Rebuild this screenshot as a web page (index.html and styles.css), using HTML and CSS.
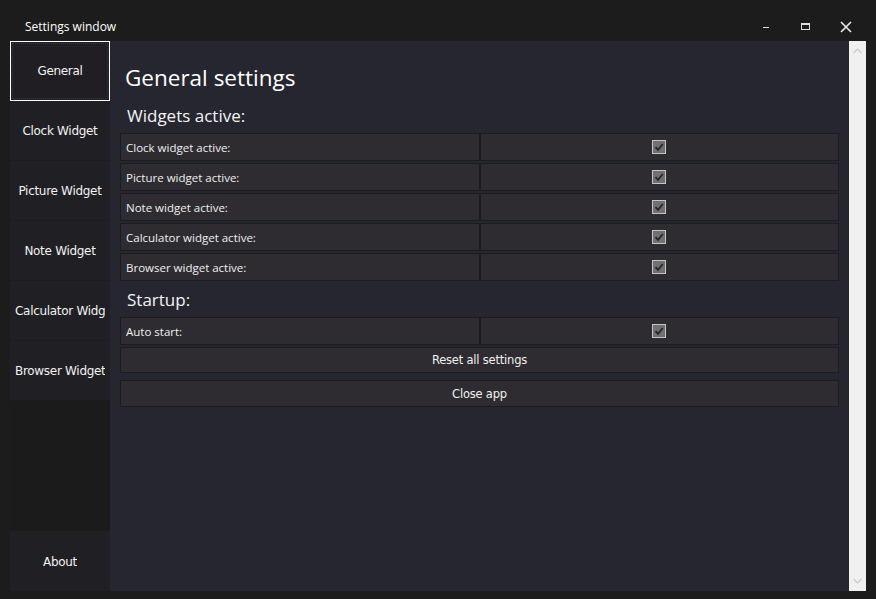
FILE: index.html
```html
<!DOCTYPE html>
<html>
<head>
<meta charset="utf-8">
<title>Settings window</title>
<link rel="stylesheet" href="styles.css">
</head>
<body>
<div class="window">
  <header class="titlebar">
    <span class="title">Settings window</span>
    <div class="controls">
      <span class="ctrl"><svg width="10" height="10" viewBox="0 0 10 10"><rect x="2" y="5" width="6" height="1" fill="#e0e0e0"/></svg></span>
      <span class="ctrl"><svg width="10" height="10" viewBox="0 0 10 10"><rect x="0.5" y="1.5" width="8" height="6" fill="none" stroke="#e0e0e0" stroke-width="1"/><rect x="0" y="1" width="9" height="2" fill="#e0e0e0"/></svg></span>
      <span class="ctrl"><svg width="12" height="12" viewBox="0 0 12 12"><path d="M1 1 L11 11 M11 1 L1 11" stroke="#e8e8e8" stroke-width="1.6"/></svg></span>
    </div>
  </header>
  <div class="frame">
    <nav class="sidebar">
      <div class="navbtn active"><span>General</span></div>
      <div class="navbtn"><span>Clock Widget</span></div>
      <div class="navbtn"><span>Picture Widget</span></div>
      <div class="navbtn"><span>Note Widget</span></div>
      <div class="navbtn"><span>Calculator Widget</span></div>
      <div class="navbtn"><span>Browser Widget</span></div>
      <div class="navspacer"></div>
      <div class="navbtn about"><span>About</span></div>
    </nav>
    <main class="content">
      <h1 class="heading">General settings</h1>
      <h2 class="subheading">Widgets active:</h2>
      <div class="rows">
        <div class="row"><div class="cell label">Clock widget active:</div><div class="cell check"><span class="checkbox"><svg width="12" height="12" viewBox="0 0 12 12"><path d="M2.5 6.2 L5 8.8 L9.8 3" fill="none" stroke="#262626" stroke-width="1.8"/></svg></span></div></div>
        <div class="row"><div class="cell label">Picture widget active:</div><div class="cell check"><span class="checkbox"><svg width="12" height="12" viewBox="0 0 12 12"><path d="M2.5 6.2 L5 8.8 L9.8 3" fill="none" stroke="#262626" stroke-width="1.8"/></svg></span></div></div>
        <div class="row"><div class="cell label">Note widget active:</div><div class="cell check"><span class="checkbox"><svg width="12" height="12" viewBox="0 0 12 12"><path d="M2.5 6.2 L5 8.8 L9.8 3" fill="none" stroke="#262626" stroke-width="1.8"/></svg></span></div></div>
        <div class="row"><div class="cell label">Calculator widget active:</div><div class="cell check"><span class="checkbox"><svg width="12" height="12" viewBox="0 0 12 12"><path d="M2.5 6.2 L5 8.8 L9.8 3" fill="none" stroke="#262626" stroke-width="1.8"/></svg></span></div></div>
        <div class="row"><div class="cell label">Browser widget active:</div><div class="cell check"><span class="checkbox"><svg width="12" height="12" viewBox="0 0 12 12"><path d="M2.5 6.2 L5 8.8 L9.8 3" fill="none" stroke="#262626" stroke-width="1.8"/></svg></span></div></div>
      </div>
      <h2 class="subheading startup">Startup:</h2>
      <div class="rows">
        <div class="row"><div class="cell label">Auto start:</div><div class="cell check"><span class="checkbox"><svg width="12" height="12" viewBox="0 0 12 12"><path d="M2.5 6.2 L5 8.8 L9.8 3" fill="none" stroke="#262626" stroke-width="1.8"/></svg></span></div></div>
        <div class="btn reset">Reset all settings</div>
      </div>
      <div class="btn close">Close app</div>
    </main>
    <div class="scrollbar">
      <svg width="9" height="6" viewBox="0 0 9 6"><path d="M0.5 5 L4.5 1 L8.5 5" fill="none" stroke="#c8c8c8" stroke-width="1.2"/></svg>
      <svg width="9" height="6" viewBox="0 0 9 6"><path d="M0.5 1 L4.5 5 L8.5 1" fill="none" stroke="#c8c8c8" stroke-width="1.2"/></svg>
    </div>
  </div>
</div>
</body>
</html>
```

FILE: styles.css
```css
* { box-sizing: border-box; }
html, body { margin: 0; padding: 0; }
body {
  background: #1c1c1c;
  width: 876px;
  height: 599px;
  overflow: hidden;
}
.window {
  width: 876px;
  height: 599px;
  background: #1c1c1c;
  display: flex;
  flex-direction: column;
}
.titlebar {
  height: 41px;
  display: flex;
  align-items: center;
  padding: 12px 10px 0 25px;
  color: #ffffff;
}
.title {
  font-family: "Open Sans", "Noto Sans", sans-serif;
  font-size: 12px;
}
.controls {
  margin-left: auto;
  display: flex;
}
.ctrl {
  width: 40px;
  height: 28px;
  display: flex;
  align-items: center;
  justify-content: center;
}
.frame {
  height: 550px;
  margin: 0 10px;
  display: flex;
}
.sidebar {
  width: 100px;
  background: #1c1b1c;
  display: flex;
  flex-direction: column;
}
.navbtn {
  height: 60px;
  background: #201f24;
  border-bottom: 1px solid #1c1b1f;
  display: flex;
  align-items: center;
  justify-content: center;
  padding: 0 5px;
  overflow: hidden;
  white-space: nowrap;
  font-family: "DejaVu Sans", sans-serif;
  font-size: 12px;
  letter-spacing: -0.3px;
  color: #f2f2f2;
}
.navbtn span { display: block; max-width: 100%; overflow: hidden; text-align: center; }
.navbtn.active {
  border: 1px solid #ffffff;
  background: #201e22;
  outline: 1px dotted #3a3a3a;
  outline-offset: -3px;
}
.navspacer { flex: 1; }
.navbtn.about { border-bottom: none; padding-top: 1px; }
.content {
  flex: 1;
  background: #262630;
  padding: 0 10px;
  display: flex;
  flex-direction: column;
}
.heading {
  margin: 19px 0 1px 5px;
  height: 36px;
  line-height: 36px;
  font-family: "Open Sans", "Noto Sans", sans-serif;
  font-weight: 400;
  font-size: 22.5px;
  color: #ffffff;
}
.subheading {
  margin: 5px 0 3px 7px;
  height: 28px;
  line-height: 28px;
  font-family: "Open Sans", "Noto Sans", sans-serif;
  font-weight: 400;
  font-size: 17px;
  color: #f4f4f4;
}
.subheading.startup { margin-top: 5px; }
.rows {
  display: flex;
  flex-direction: column;
  gap: 2px;
}
.row {
  height: 28px;
  display: flex;
}
.cell {
  flex: 0 0 50%;
  min-width: 0;
  background: #2e2c31;
  border: 1px solid #1c1b1f;
  display: flex;
  align-items: center;
}
.cell.label {
  padding-left: 5px;
  font-family: "Open Sans", "Noto Sans", sans-serif;
  font-size: 11.5px;
  color: #f0f0f0;
}
.cell.check { justify-content: center; }
.checkbox {
  width: 14px;
  height: 14px;
  background: #707070;
  border: 1px solid #c4c4c4;
  display: flex;
  align-items: center;
  justify-content: center;
}
.btn {
  background: #2e2c31;
  border: 1px solid #1c1b1f;
  display: flex;
  align-items: center;
  justify-content: center;
  font-family: "DejaVu Sans", sans-serif;
  font-size: 11.5px;
  letter-spacing: -0.2px;
  color: #f0f0f0;
}
.btn.reset { height: 26px; }
.btn.close { height: 27px; margin-top: 7px; }
.scrollbar {
  width: 17px;
  background: #f0f0f0;
  display: flex;
  flex-direction: column;
  justify-content: space-between;
  align-items: center;
  padding: 7px 0 7px;
}
```
